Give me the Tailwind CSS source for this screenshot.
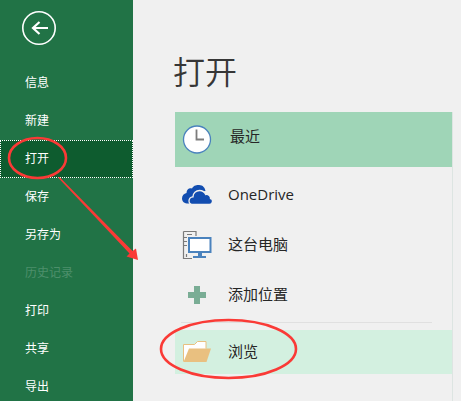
<!DOCTYPE html>
<html lang="zh-CN">
<head>
<meta charset="utf-8">
<meta name="viewport" content="width=device-width, initial-scale=1">
<title>打开</title>
<script src="https://cdn.jsdelivr.net/npm/@tailwindcss/browser@4"></script>
</head>
<body class="relative flex min-h-screen overflow-x-hidden bg-[#f0f0f0] font-['Open_Sans','Noto_Sans_CJK_SC',sans-serif] text-[#262626]">
  <aside class="w-[133px] shrink-0 bg-[#217346] pt-[11px] text-white">
    <button type="button" aria-label="返回" class="ml-[22px] block">
      <svg class="size-[34px]" viewBox="0 0 34 34" fill="none" stroke="#fff" aria-hidden="true">
        <circle cx="17" cy="17" r="16.2" stroke-width="1.6"/>
        <path d="M26 17H11" stroke-width="2"/>
        <path d="M17.500 11 11 17l6.500 6" stroke-width="2.200"/>
      </svg>
    </button>
    <nav class="mt-[19px] flex flex-col text-[12px] leading-[18px]">
      <a href="#" class="flex h-[38px] items-center pl-[25px]">信息</a>
      <a href="#" class="flex h-[38px] items-center pl-[25px]">新建</a>
      <a href="#" aria-current="page" class="flex h-[38px] items-center bg-[#0e5c2f] pl-[25px] outline-1 -outline-offset-1 outline-dotted outline-white">打开</a>
      <a href="#" class="flex h-[38px] items-center pl-[25px]">保存</a>
      <a href="#" class="flex h-[38px] items-center pl-[25px]">另存为</a>
      <a href="#" aria-disabled="true" class="flex h-[38px] items-center pl-[25px] text-[#4d8f6b]">历史记录</a>
      <a href="#" class="flex h-[38px] items-center pl-[25px]">打印</a>
      <a href="#" class="flex h-[38px] items-center pl-[25px]">共享</a>
      <a href="#" class="flex h-[33px] items-center pl-[25px] pt-1">导出</a>
    </nav>
  </aside>

  <main class="flex min-w-0 flex-1 flex-col pr-2 pl-10">
    <h1 class="pt-[48px] text-[32px] leading-[48px] font-[350] text-[#363636]">打开</h1>
    <div class="mt-4 ml-[2px] flex flex-1 flex-col border-r border-[#dde5e2] text-[15px] leading-[22px]">
      <button type="button" class="flex h-[55px] items-center gap-[18px] bg-[#9fd5b7] pl-[7px] text-left">
        <svg class="size-[30px]" viewBox="0 0 30 30" fill="none" aria-hidden="true">
          <circle cx="15" cy="14.500" r="13.500" fill="#fff" stroke="#4a82bd" stroke-width="1.300"/>
          <path d="M14.500 4.500v10H22" stroke="#7c7c7c" stroke-width="1.800"/>
        </svg>
        <span class="pb-2">最近</span>
      </button>
      <button type="button" class="mt-[3px] flex h-[50px] items-center gap-4 pl-[7px] text-left">
        <svg class="size-[30px]" viewBox="0 0 30 30" fill="#124db0" aria-hidden="true">
          <path d="M7.500 23.500C3 24 0 22 0 18.500c0-3 2-5 4.500-5.500C4.500 9 7.500 7.500 10 8.500 12 5 15 5 17 5c4 0 6 3 6.500 6C17 11 9 14 7.500 23.500Z"/>
          <path d="M11.500 24.500C8.500 24.500 7 23 7 21c0-2.500 2-4 4-4.200C11 13 14 10.500 17.500 10.500c3 0 5 1.500 6.200 4 3-.5 5 2 4.800 4 3 .5 2.500 6-1 6Z" stroke="#f0f0f0" stroke-width="1.300"/>
        </svg>
        <span class="pb-[2px]">OneDrive</span>
      </button>
      <button type="button" class="flex h-[50px] items-center gap-4 pl-[7px] text-left">
        <svg class="size-[30px]" viewBox="0 0 30 30" fill="none" aria-hidden="true">
          <path d="M1.500 1.500H14V6M1.500 1.500v27H10M1 7.500h4M1 11.500h4M1 15.500h4M5 4.500h5M4.500 24v3" stroke="#7a7a7a" stroke-width="1.200"/>
          <path d="M7 8h21.500v14H7Z" fill="#fff" stroke="#4a82bd" stroke-width="2"/>
          <path d="M16 23h4v3h4v2H11v-2h5Z" fill="#4a82bd"/>
        </svg>
        <span class="pb-[2px]">这台电脑</span>
      </button>
      <button type="button" class="flex h-[50px] items-center gap-4 pl-[7px] text-left">
        <svg class="size-[30px]" viewBox="0 0 30 30" aria-hidden="true">
          <path d="M12 6h6v6h6v6h-6v6h-6v-6H6v-6h6Z" fill="#7aad95"/>
        </svg>
        <span class="pb-[2px]">添加位置</span>
      </button>
      <hr class="mt-[2px] mr-5 ml-[6px] border-[#e0e0e0]">
      <button type="button" class="mt-[7px] flex h-[44px] items-center gap-4 bg-[#d3f0e0] pl-[7px] text-left">
        <svg class="size-[30px]" viewBox="0 0 30 30" aria-hidden="true">
          <path d="M1.500 24.500V7.500h11l3-3H24v7" fill="#fff" stroke="#e9c080" stroke-width="1"/>
          <path d="M7 11.500h22L24.500 25H1.500Z" fill="#e9c080"/>
        </svg>
        <span class="pb-[2px]">浏览</span>
      </button>
    </div>
  </main>

  <svg class="pointer-events-none absolute top-0 left-0 h-[401px] w-[461px]" viewBox="0 0 461 401" fill="none" stroke="#fa3a36" aria-hidden="true">
    <ellipse cx="37.500" cy="158" rx="28.500" ry="20" stroke-width="2.600"/>
    <ellipse cx="228.500" cy="349" rx="67.500" ry="29" stroke-width="2.600"/>
    <path d="M58 177.500 59.500 177 132.500 251 136 248.500 138 260 126.500 256.500 129.500 253.500Z" fill="#fa3a36" stroke="none"/>
  </svg>
</body>
</html>
